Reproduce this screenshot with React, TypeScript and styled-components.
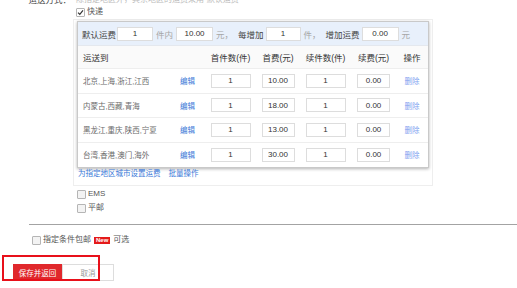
import React from 'react';
import styled, { createGlobalStyle } from 'styled-components';

const GlobalStyle = createGlobalStyle`
    html, body {
        margin: 0;
        padding: 0;
        background: #fff;
    }
    body {
        font-family: "Liberation Sans", "Noto Sans CJK SC", sans-serif;
        font-size: 8px;
        color: #555;
        overflow: hidden;
    }
`;

const Page = styled.div`
    width: 517px;
    height: 288px;
    position: relative;
    overflow: hidden;
`;

const FormRow = styled.div`
    display: flex;
    margin-top: -5px;
`;

const Label = styled.div`
    width: 71px;
    flex-shrink: 0;
    text-align: right;
    color: #444;
    line-height: 10px;
    font-size: 8.5px;
`;

const Content = styled.div`
    margin-left: 2px;
    width: 360px;
`;

const Hint = styled.div`
    height: 10px;
    line-height: 10px;
    padding-left: 3px;
    color: #bbb;
`;

const CheckRow = styled.label<{ $top?: number; $left?: number }>`
    display: flex;
    align-items: center;
    gap: 2px;
    height: 10px;
    line-height: 10px;
    margin-top: ${p => p.$top ?? 0}px;
    padding-left: ${p => p.$left ?? 3}px;
    color: #555;
`;

const Box = styled.span<{ $checked?: boolean }>`
    width: 7px;
    height: 7px;
    border: 1px solid #b5b5b5;
    border-radius: 1px;
    background: ${p => (p.$checked ? '#fff' : '#f3f3f3')};
    display: inline-flex;
    align-items: center;
    justify-content: center;
    flex-shrink: 0;
    box-sizing: content-box;
`;

const Panel = styled.div`
    margin-top: 2px;
    border: 1px solid #eee;
    padding: 1px 3px 6px 3px;
`;

const Card = styled.div`
    border: 1px solid #c9c9c9;
    box-shadow: 0 1px 3px rgba(0, 0, 0, 0.3);
    background: #fff;
`;

const TopBar = styled.div`
    height: 24px;
    background: #e8f0fb;
    display: flex;
    align-items: center;
    padding-left: 3px;
    border-bottom: 1px solid #e4e8ee;
    box-sizing: border-box;
`;

const BarText = styled.span<{ $muted?: boolean; $gap?: number }>`
    color: ${p => (p.$muted ? '#a6a6a6' : '#444')};
    margin: 0 ${p => p.$gap ?? 3}px;
    font-size: 8.5px;
    white-space: nowrap;
`;

const Field = styled.div<{ $w: number }>`
    width: ${p => p.$w}px;
    height: 14px;
    border: 1px solid #ddd;
    background: #fff;
    box-sizing: border-box;
    display: flex;
    align-items: center;
    justify-content: center;
    color: #333;
    font-size: 8px;
`;

const Grid = styled.div`
    display: grid;
    grid-template-columns: 92px 35px 51px 44px 51px 45px 1fr;
`;

const HeadCell = styled.div<{ $left?: boolean }>`
    height: 22px;
    display: flex;
    align-items: center;
    justify-content: ${p => (p.$left ? 'flex-start' : 'center')};
    padding-left: ${p => (p.$left ? 5 : 0)}px;
    color: #333;
    font-size: 8.5px;
    background: #fafafa;
    border-bottom: 1px solid #eee;
    white-space: nowrap;
`;

const Cell = styled.div<{ $left?: boolean; $last?: boolean }>`
    height: 24.5px;
    box-sizing: border-box;
    display: flex;
    align-items: center;
    justify-content: ${p => (p.$left ? 'flex-start' : 'center')};
    padding-left: ${p => (p.$left ? 5 : 0)}px;
    border-bottom: ${p => (p.$last ? 'none' : '1px solid #eee')};
    color: #6a6a6a;
    font-size: 7.5px;
    white-space: nowrap;
`;

const Link = styled.span<{ $light?: boolean }>`
    color: ${p => (p.$light ? '#7f9ff0' : '#3a78d8')};
    cursor: pointer;
    font-size: 7.5px;
`;

const LinkLine = styled.div`
    height: 10px;
    line-height: 10px;
    margin-top: 1px;
    padding-left: 1px;
    display: flex;
    gap: 8px;
`;

const Divider = styled.div`
    margin: 11px 0 0 29px;
    height: 1px;
    background: #a3a3a3;
`;

const NewBadge = styled.span`
    background: #e41a1a;
    color: #fff;
    font-size: 6px;
    font-weight: bold;
    line-height: 7px;
    padding: 0 2px;
    margin: 0 1px;
`;

const Actions = styled.div`
    display: flex;
    margin: 19px 0 0 13px;
`;

const Button = styled.button<{ $primary?: boolean }>`
    height: 17px;
    width: ${p => (p.$primary ? 49 : 52)}px;
    padding: 0;
    border: 1px solid ${p => (p.$primary ? '#e0282c' : '#ddd')};
    background: ${p => (p.$primary ? '#e0282c' : '#fff')};
    color: ${p => (p.$primary ? '#fff' : '#999')};
    font-family: inherit;
    font-size: 7.5px;
    cursor: pointer;
`;

const Highlight = styled.div`
    position: absolute;
    left: 2px;
    top: 255px;
    width: 98px;
    height: 26px;
    border: 2px solid #e8101a;
    box-sizing: border-box;
    pointer-events: none;
`;

const Check = () => (
    <svg width="7" height="7" viewBox="0 0 7 7">
        <path d="M1 3.6 L2.8 5.4 L6 1.4" stroke="#333" strokeWidth="1.2" fill="none" />
    </svg>
);

const rows = [
    { area: '北京,上海,浙江,江西', first: '10.00' },
    { area: '内蒙古,西藏,青海', first: '18.00' },
    { area: '黑龙江,重庆,陕西,宁夏', first: '13.00' },
    { area: '台湾,香港,澳门,海外', first: '30.00' },
];

const App: React.FC = () => {
    return (
        <Page>
            <GlobalStyle />
            <FormRow>
                <Label>运送方式：</Label>
                <Content>
                    <Hint>除指定地区外，其余地区的运费采用“默认运费”</Hint>
                    <CheckRow $top={2}>
                        <Box $checked><Check /></Box>
                        快递
                    </CheckRow>
                    <Panel>
                        <Card>
                            <TopBar>
                                <BarText $gap={1}>默认运费</BarText>
                                <Field $w={36}>1</Field>
                                <BarText $muted>件内</BarText>
                                <Field $w={37}>10.00</Field>
                                <BarText $muted>元，</BarText>
                                <BarText $gap={2}>每增加</BarText>
                                <Field $w={35}>1</Field>
                                <BarText $muted>件，</BarText>
                                <BarText $gap={2}>增加运费</BarText>
                                <Field $w={37}>0.00</Field>
                                <BarText $muted>元</BarText>
                            </TopBar>
                            <Grid>
                                <HeadCell $left>运送到</HeadCell>
                                <HeadCell />
                                <HeadCell>首件数(件)</HeadCell>
                                <HeadCell>首费(元)</HeadCell>
                                <HeadCell>续件数(件)</HeadCell>
                                <HeadCell>续费(元)</HeadCell>
                                <HeadCell>操作</HeadCell>
                                {rows.map((row, i) => {
                                    const last = i === rows.length - 1;
                                    return (
                                        <React.Fragment key={row.area}>
                                            <Cell $left $last={last}>{row.area}</Cell>
                                            <Cell $last={last}><Link>编辑</Link></Cell>
                                            <Cell $last={last}><Field $w={40}>1</Field></Cell>
                                            <Cell $last={last}><Field $w={33}>{row.first}</Field></Cell>
                                            <Cell $last={last}><Field $w={40}>1</Field></Cell>
                                            <Cell $last={last}><Field $w={33}>0.00</Field></Cell>
                                            <Cell $last={last}><Link $light>删除</Link></Cell>
                                        </React.Fragment>
                                    );
                                })}
                            </Grid>
                        </Card>
                        <LinkLine>
                            <Link>为指定地区城市设置运费</Link>
                            <Link>批量操作</Link>
                        </LinkLine>
                    </Panel>
                    <CheckRow $top={3} $left={4}>
                        <Box />
                        EMS
                    </CheckRow>
                    <CheckRow $top={4} $left={4}>
                        <Box />
                        平邮
                    </CheckRow>
                </Content>
            </FormRow>
            <Divider />
            <CheckRow $top={10} $left={32}>
                <Box />
                指定条件包邮<NewBadge>New</NewBadge>可选
            </CheckRow>
            <Actions>
                <Button $primary>保存并返回</Button>
                <Button>取消</Button>
            </Actions>
            <Highlight />
        </Page>
    );
};

export default App;
